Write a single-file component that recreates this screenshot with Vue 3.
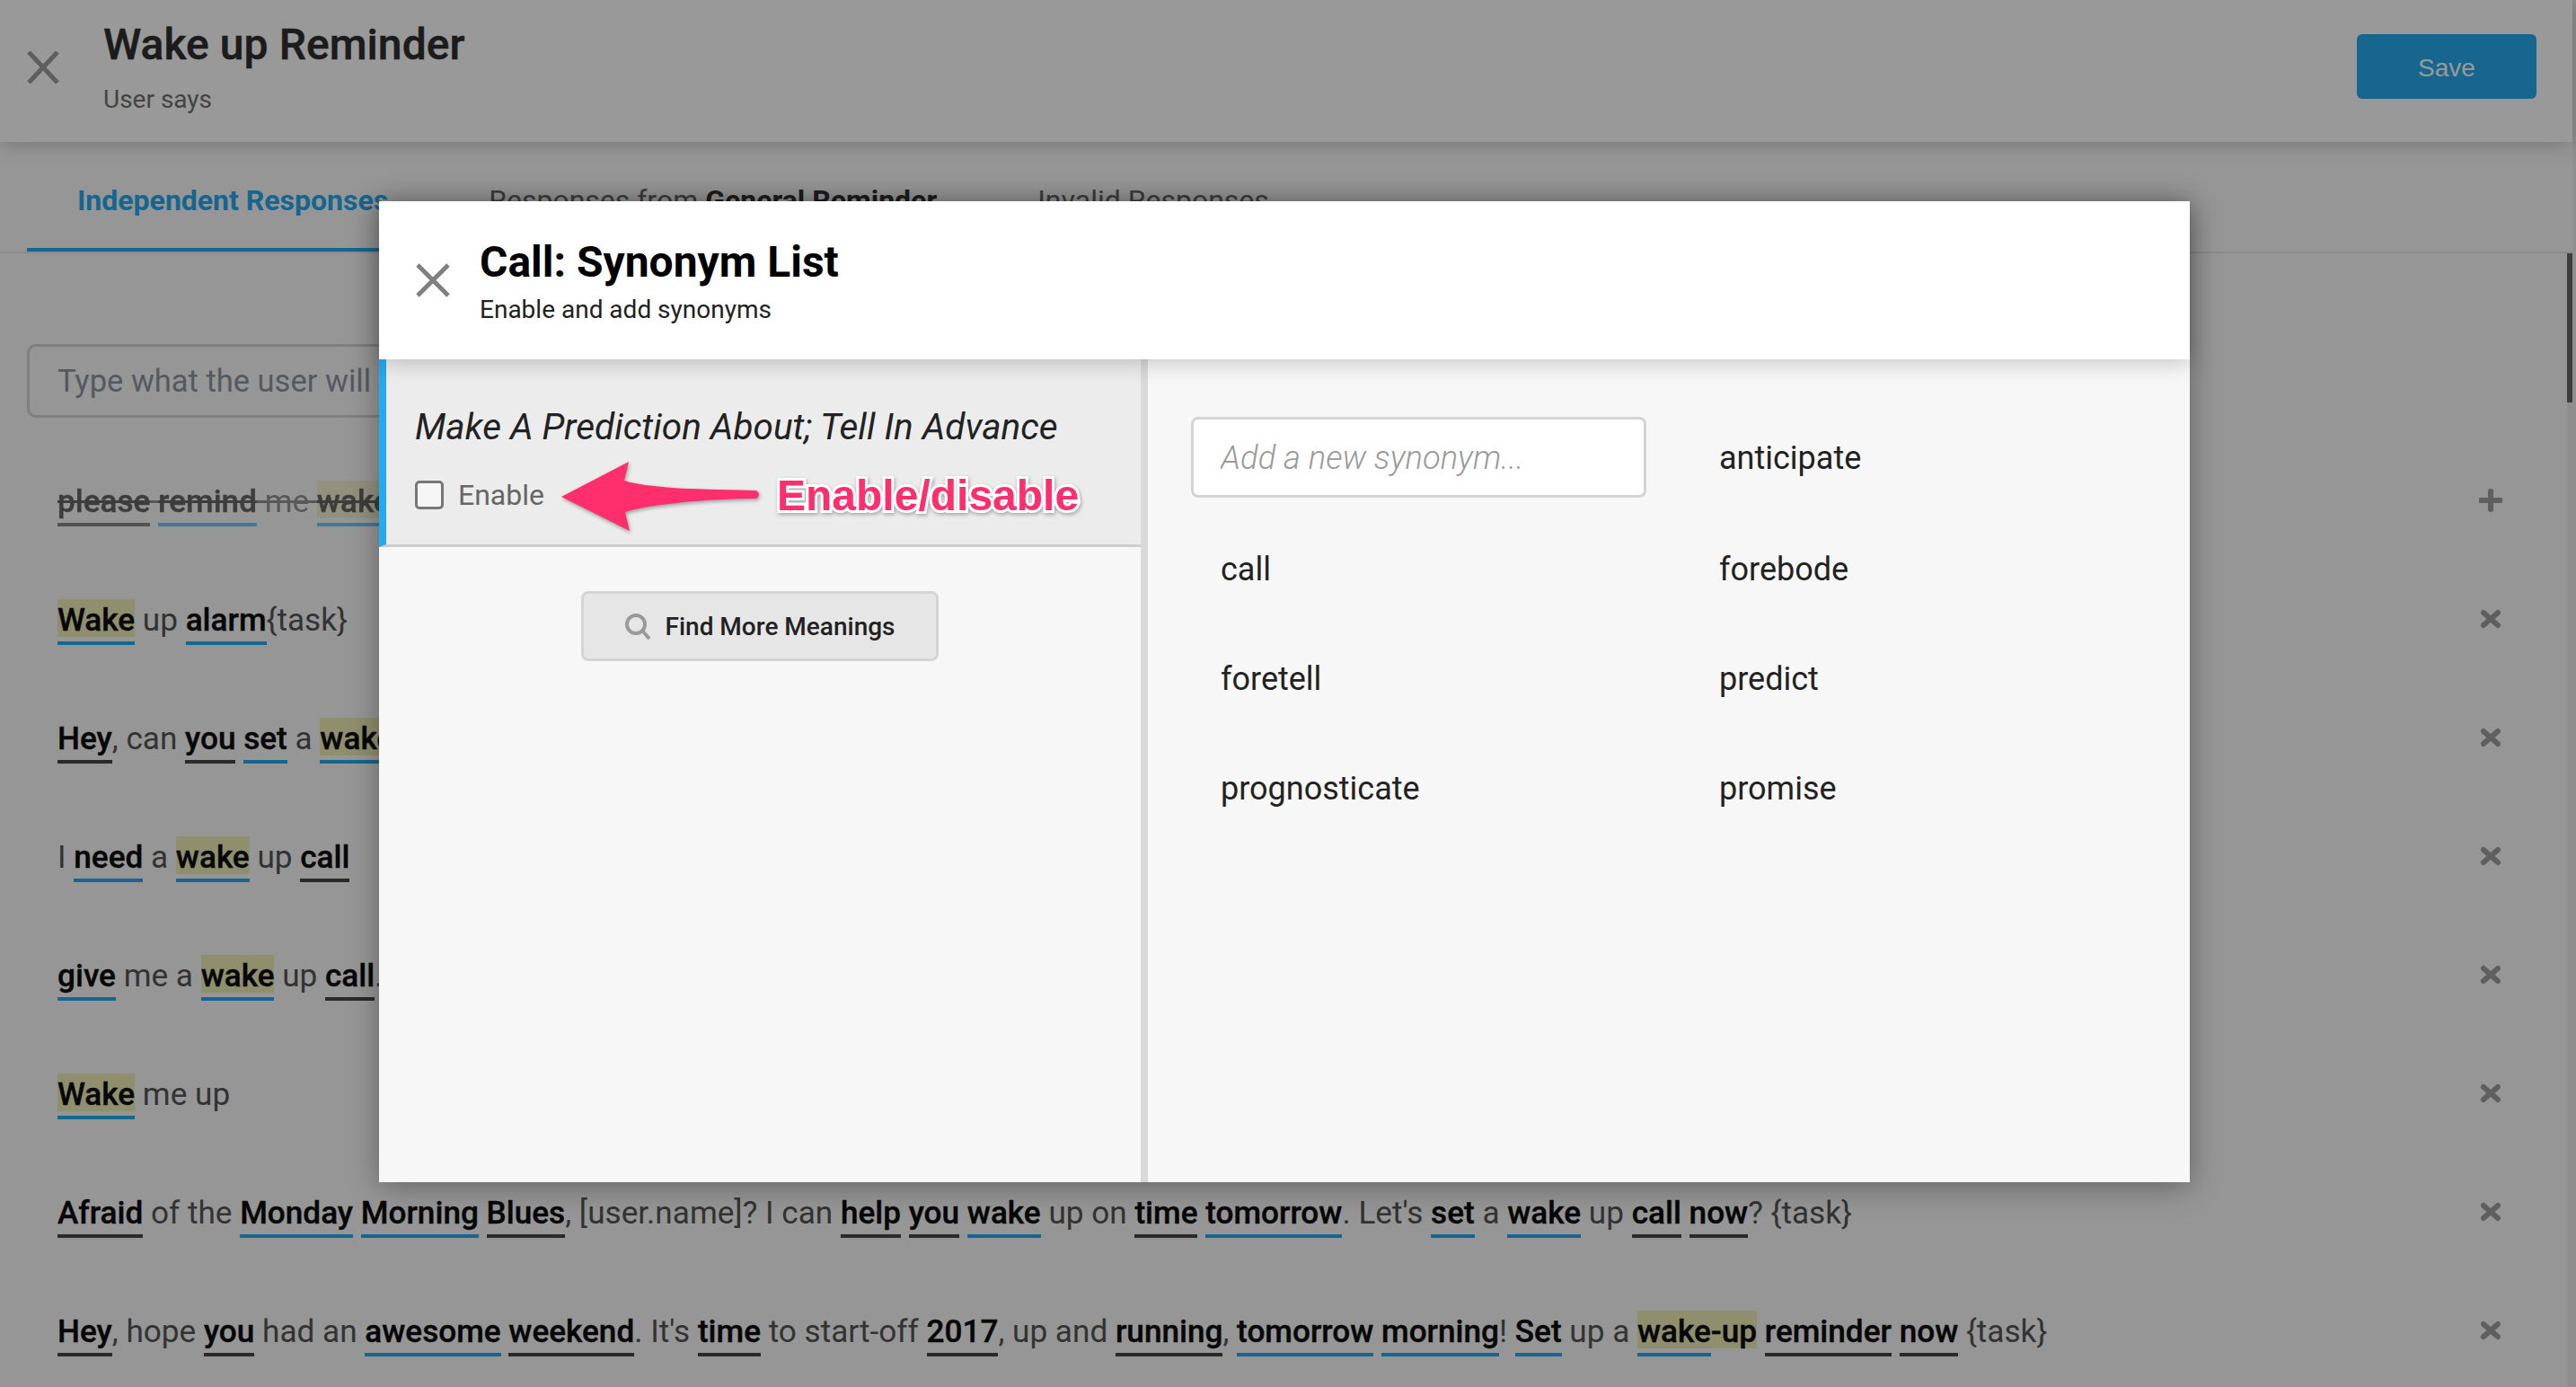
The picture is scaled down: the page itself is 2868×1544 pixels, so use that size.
<template>
  <div class="page">
    <div class="main">
      <header class="top">
        <svg class="top-close" viewBox="0 0 36 36"><path d="M2 1 L34 35 M34 1 L2 35" /></svg>
        <div class="top-titles">
          <div class="top-title">Wake up Reminder</div>
          <div class="top-sub">User says</div>
        </div>
        <button class="save">Save</button>
      </header>

      <nav class="tabs">
        <div class="tab active">Independent Responses</div>
        <div class="tab">Responses from <b>General Reminder</b></div>
        <div class="tab">Invalid Responses</div>
      </nav>

      <div class="content">
        <div class="rows">
          <div class="say-box">Type what the user will say...</div>
          <div v-for="(row, i) in rows" :key="i" class="row" :class="{ struck: i === 0 }">
            <div class="row-text">
              <span v-for="(tok, j) in row" :key="j" class="tok" :class="tok[1]">{{ tok[0] }}</span>
            </div>
            <svg class="row-icon" viewBox="0 0 26 26">
              <path v-if="i === 0" d="M13 3 V23 M2 13 H24" />
              <path v-else d="M5 6 L21 20 M21 6 L5 20" />
            </svg>
          </div>
        </div>
        <div class="scrollbar"><div class="thumb"></div></div>
      </div>
    </div>
    <div class="edge"></div>

    <div class="overlay">
      <div class="modal">
        <div class="modal-head">
          <svg class="modal-close" viewBox="0 0 38 38"><path d="M2 2 L36 36 M36 2 L2 36" /></svg>
          <div>
            <div class="modal-title">Call: Synonym List</div>
            <div class="modal-sub">Enable and add synonyms</div>
          </div>
        </div>

        <div class="modal-body">
          <div class="left">
            <div class="meaning">
              <div class="meaning-title">Make A Prediction About; Tell In Advance</div>
              <label class="enable"><input type="checkbox" /> <span>Enable</span></label>

              <svg class="arrow" viewBox="0 0 240 100">
                <path d="M8 48 L83 9 L78 30 C110 40 180 40 225 41 Q231 45 225 50 C180 50 110 55 79 65 L84 86 Z" />
              </svg>
              <div class="note">Enable/disable</div>
            </div>
            <button class="more">
              <svg viewBox="0 0 30 30"><circle cx="13" cy="13" r="10" /><path d="M20 20 L28 29" /></svg>
              Find More Meanings
            </button>
          </div>

          <div class="right">
            <div class="syn-grid">
              <input class="syn-input" placeholder="Add a new synonym..." />
              <div v-for="s in synonyms" :key="s" class="syn">{{ s }}</div>
            </div>
          </div>
        </div>
      </div>
    </div>
  </div>
</template>

<script setup>
const B = 'word blue'
const D = 'word dark'
const H = 'word blue hl'

const synonyms = ['anticipate', 'call', 'forebode', 'foretell', 'predict', 'prognosticate', 'promise']

const rows = [
  [['please', D], [' '], ['remind', B], [' me '], ['wake', H], [' up', '']],
  [['Wake', H], [' up '], ['alarm', B], ['{task}']],
  [['Hey', D], [', can '], ['you', D], [' '], ['set', B], [' a '], ['wake', H], [' up '], ['call', D]],
  [['I '], ['need', B], [' a '], ['wake', H], [' up '], ['call', D]],
  [['give', B], [' me a '], ['wake', H], [' up '], ['call', D], ['.']],
  [['Wake', H], [' me up']],
  [
    ['Afraid', D], [' of the '], ['Monday', B], [' '], ['Morning', B], [' '], ['Blues', D], [', [user.name]? I can '],
    ['help', D], [' '], ['you', D], [' '], ['wake', B], [' up on '], ['time', D], [' '], ['tomorrow', B], ['. Let\'s '],
    ['set', B], [' a '], ['wake', B], [' up '], ['call', D], [' '], ['now', D], ['? {task}']
  ],
  [
    ['Hey', D], [', hope '], ['you', D], [' had an '], ['awesome', B], [' '], ['weekend', D], ['. It\'s '], ['time', D],
    [' to start-off '], ['2017', D], [', up and '], ['running', D], [', '], ['tomorrow', B], [' '], ['morning', B], ['! '],
    ['Set', B], [' up a '], ['wake', H], ['-up', 'word hl'], [' '], ['reminder', D], [' '], ['now', D], [' {task}']
  ]
]
</script>

<style>
html, body { margin: 0; height: 100%; overflow: hidden; background: #fafafa; }
</style>

<style scoped>
.page {
  position: relative;
  display: flex;
  width: 2868px;
  height: 1544px;
  overflow: hidden;
  font-family: Roboto, "Liberation Sans", sans-serif;
  color: #555;
}

.main {
  flex: 1;
  min-width: 0;
  display: flex;
  flex-direction: column;
}

.edge {
  width: 4px;
  background: #eeeeee;
}

.top {
  position: relative;
  z-index: 2;
  height: 158px;
  flex: none;
  display: flex;
  align-items: flex-start;
  background: #fff;
  box-shadow: 0 2px 22px rgba(0, 0, 0, 0.22);
  box-sizing: border-box;
  padding-right: 40px;
}

.top-close {
  width: 36px;
  height: 36px;
  margin: 57px 49px 0 30px;
  flex: none;
}

.top-close path {
  fill: none;
  stroke: #9d9d9d;
  stroke-width: 5;
}

.top-titles {
  flex: 1;
  padding-top: 23px;
}

.top-title {
  font-size: 48px;
  line-height: 54px;
  font-weight: 500;
  letter-spacing: 0.06px;
  color: #303030;
  -webkit-text-stroke: 0.5px #303030;
}

.top-sub {
  font-size: 28px;
  line-height: 34px;
  margin-top: 17px;
  color: #707070;
}

.save {
  width: 200px;
  height: 72px;
  margin-top: 38px;
  padding-top: 4px;
  border: none;
  border-radius: 6px;
  background: #25aaee;
  color: #fff;
  font-family: "Liberation Sans", sans-serif;
  font-size: 28px;
}

.tabs {
  height: 124px;
  flex: none;
  box-sizing: border-box;
  display: flex;
  padding-left: 30px;
  border-bottom: 2px solid #e6e6e6;
}

.tab {
  padding: 46px 56px 0;
  height: 122px;
  box-sizing: border-box;
  font-size: 32px;
  line-height: 38px;
  color: #666;
}

.tab b {
  font-weight: 700;
  color: #333;
}

.tab.active {
  color: #25aaee;
  font-weight: 700;
  border-bottom: 4px solid #25aaee;
}

.content {
  flex: 1;
  min-height: 0;
  display: flex;
}

.rows {
  flex: 1;
  min-width: 0;
}

.say-box {
  box-sizing: border-box;
  margin: 101px 0 30px 30px;
  width: 2200px;
  height: 82px;
  padding-left: 31px;
  border: 3px solid #d4d4d4;
  border-radius: 10px;
  font-size: 34.5px;
  line-height: 76px;
  color: #8e96a0;
}

.row {
  display: flex;
  justify-content: space-between;
  height: 132px;
  box-sizing: border-box;
  padding: 40px 72px 0 64px;
}

.row-text {
  font-size: 35.15px;
  line-height: 42px;
  color: #555;
  white-space: nowrap;
}

.tok {
  display: inline-block;
  white-space: pre;
  padding: 2px 0 3px;
  border-bottom: 4px solid transparent;
}

.word {
  font-weight: 500;
  color: #0c0c0c;
  -webkit-text-stroke: 0.4px #0c0c0c;
}

.word.blue { border-bottom-color: #25aaee; }
.word.dark { border-bottom-color: #464646; }

.hl {
  background: linear-gradient(#eeeeb7, #eeeeb7) no-repeat top / 100% 42px;
}

.struck .row-text { opacity: 0.62; }
.struck .tok { text-decoration: line-through; }

.row-icon {
  width: 26px;
  height: 26px;
  margin-top: 9px;
  flex: none;
}

.row-icon path {
  fill: none;
  stroke: #9e9e9e;
  stroke-width: 6;
  stroke-linecap: round;
}

.scrollbar {
  width: 6px;
  flex: none;
  background: #ededed;
}

.thumb {
  height: 166px;
  background: #666;
}

.overlay {
  position: absolute;
  inset: 0;
  z-index: 10;
  background: rgba(0, 0, 0, 0.4);
}

.modal {
  position: absolute;
  left: 422px;
  top: 224px;
  width: 2016px;
  height: 1092px;
  display: flex;
  flex-direction: column;
  background: #f7f7f7;
  box-shadow: 0 4px 32px rgba(0, 0, 0, 0.35);
}

.modal-head {
  position: relative;
  z-index: 1;
  height: 176px;
  flex: none;
  display: flex;
  align-items: flex-start;
  background: #fff;
  box-shadow: 0 3px 24px rgba(0, 0, 0, 0.22);
}

.modal-close {
  width: 38px;
  height: 38px;
  margin: 69px 33px 0 41px;
  flex: none;
}

.modal-close path {
  fill: none;
  stroke: #808080;
  stroke-width: 5;
}

.modal-title {
  margin-top: 39px;
  font-size: 48px;
  line-height: 58px;
  font-weight: 700;
  color: #000;
}

.modal-sub {
  margin-top: 7px;
  font-size: 28px;
  line-height: 34px;
  color: #222;
}

.modal-body {
  flex: 1;
  min-height: 0;
  display: flex;
}

.left {
  width: 856px;
  flex: none;
  box-sizing: border-box;
  border-right: 8px solid #d9d9d9;
  display: flex;
  flex-direction: column;
  align-items: center;
}

.meaning {
  position: relative;
  align-self: stretch;
  height: 209px;
  box-sizing: border-box;
  padding: 50px 32px 0;
  background: #ececec;
  border-left: 8px solid #25a9ef;
  border-bottom: 3px solid #ccc;
}

.meaning-title {
  font-size: 40.5px;
  line-height: 50px;
  font-style: italic;
  color: #222;
}

.enable {
  display: flex;
  align-items: center;
  gap: 16px;
  height: 40px;
  margin-top: 31px;
  font-size: 32px;
  color: #666;
}

.enable input {
  appearance: none;
  margin: 0;
  width: 32px;
  height: 32px;
  box-sizing: border-box;
  background: #f5f5f5;
  border: 3px solid #777;
  border-radius: 5px;
}

.arrow {
  position: absolute;
  left: 187px;
  top: 105px;
  width: 240px;
  height: 100px;
  fill: #ff2e6c;
  filter: drop-shadow(1px 2px 2px rgba(0, 0, 0, 0.35));
}

.note {
  position: absolute;
  left: 435px;
  top: 124px;
  font-family: "Liberation Sans", sans-serif;
  font-size: 48px;
  line-height: 56px;
  font-weight: 700;
  color: #ff2e6c;
  -webkit-text-stroke: 6px #fff;
  paint-order: stroke fill;
  filter: drop-shadow(1px 2px 2px rgba(0, 0, 0, 0.3));
}

.more {
  display: flex;
  align-items: center;
  justify-content: center;
  gap: 15px;
  width: 398px;
  height: 78px;
  margin-top: 49px;
  background: #e6e6e6;
  border: 3px solid #d4d4d4;
  border-radius: 8px;
  font-family: inherit;
  font-size: 28px;
  font-weight: 500;
  color: #222;
}

.more svg {
  width: 30px;
  height: 30px;
  fill: none;
  stroke: #999;
  stroke-width: 4;
}

.right {
  flex: 1;
  padding: 64px 0 0 48px;
}

.syn-grid {
  display: grid;
  grid-template-columns: 507px 507px;
  grid-auto-rows: 90px;
  column-gap: 48px;
  row-gap: 32px;
}

.syn-input {
  box-sizing: border-box;
  width: 100%;
  height: 90px;
  padding: 1px 30px 0;
  border: 3px solid #d4d4d4;
  border-radius: 8px;
  background: #fff;
  font-family: inherit;
  font-size: 36.4px;
  font-style: italic;
  outline: none;
}

.syn-input::placeholder {
  color: #9a9a9a;
  font-weight: 300;
}

.syn {
  padding: 3px 0 0 33px;
  font-size: 36px;
  line-height: 90px;
  color: #222;
}

.syn:first-of-type {
  padding-top: 1px;
}
</style>
